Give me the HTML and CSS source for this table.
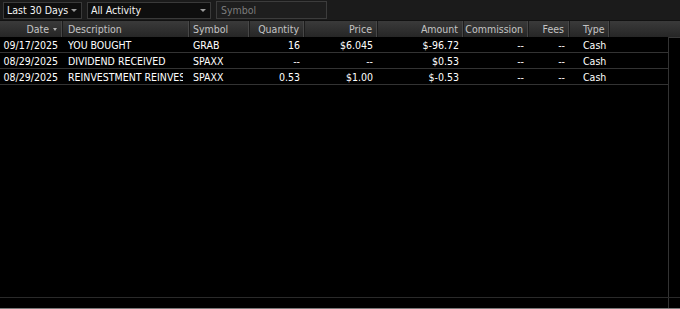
FILE: index.html
```html
<!DOCTYPE html>
<html>
<head>
<meta charset="utf-8">
<link rel="stylesheet" href="styles.css">
</head>
<body>
<div class="app">
  <div class="toolbar">
    <div class="select sel-range"><span>Last 30 Days</span><span class="caret"></span></div>
    <div class="select sel-activity"><span>All Activity</span><span class="caret"></span></div>
    <div class="input"><span class="placeholder">Symbol</span></div>
  </div>
  <div class="head">
    <div class="hc c-date r">Date <span class="sort"></span></div>
    <div class="hc c-desc">Description</div>
    <div class="hc c-sym">Symbol</div>
    <div class="hc c-qty r">Quantity</div>
    <div class="hc c-price r">Price</div>
    <div class="hc c-amt r">Amount</div>
    <div class="hc c-comm r">Commission</div>
    <div class="hc c-fees r">Fees</div>
    <div class="hc c-type">Type</div>
    <div class="hc c-fill"></div>
  </div>
  <div class="main">
    <div class="rows">
      <div class="row">
        <div class="c c-date r">09/17/2025</div>
        <div class="c c-desc"><span class="clip">YOU BOUGHT</span></div>
        <div class="c c-sym">GRAB</div>
        <div class="c c-qty r">16</div>
        <div class="c c-price r">$6.045</div>
        <div class="c c-amt r">$-96.72</div>
        <div class="c c-comm r">--</div>
        <div class="c c-fees r">--</div>
        <div class="c c-type">Cash</div>
      </div>
      <div class="row">
        <div class="c c-date r">08/29/2025</div>
        <div class="c c-desc"><span class="clip">DIVIDEND RECEIVED</span></div>
        <div class="c c-sym">SPAXX</div>
        <div class="c c-qty r">--</div>
        <div class="c c-price r">--</div>
        <div class="c c-amt r">$0.53</div>
        <div class="c c-comm r">--</div>
        <div class="c c-fees r">--</div>
        <div class="c c-type">Cash</div>
      </div>
      <div class="row">
        <div class="c c-date r">08/29/2025</div>
        <div class="c c-desc"><span class="clip">REINVESTMENT REINVEST</span></div>
        <div class="c c-sym">SPAXX</div>
        <div class="c c-qty r">0.53</div>
        <div class="c c-price r">$1.00</div>
        <div class="c c-amt r">$-0.53</div>
        <div class="c c-comm r">--</div>
        <div class="c c-fees r">--</div>
        <div class="c c-type">Cash</div>
      </div>
    </div>
    <div class="gutter"></div>
  </div>
  <div class="foot">
    <div class="foot-left"></div>
    <div class="foot-gutter"></div>
  </div>
  <div class="edge"></div>
</div>
</body>
</html>
```
FILE: styles.css
```css
* { box-sizing: border-box; }
html, body { margin: 0; padding: 0; background: #000; }
body {
  width: 680px;
  height: 309px;
  overflow: hidden;
  font-family: "DejaVu Sans Condensed", "DejaVu Sans", sans-serif;
  font-stretch: condensed;
  font-size: 10.5px;
  color: #ffffff;
}
.app { display: flex; flex-direction: column; height: 309px; }

.toolbar {
  height: 20px;
  background: #1b1b1b;
  display: flex;
  align-items: center;
  padding: 0 3px;
  gap: 5px;
  flex: none;
}
.select {
  height: 17px;
  background: #0e0e0e;
  border: 1px solid #3a3a3a;
  display: flex;
  align-items: center;
  justify-content: space-between;
  padding: 0 4px 0 3px;
  color: #f4f4f4;
}
.sel-range { width: 79px; }
.sel-activity { width: 124px; }
.caret {
  width: 0; height: 0;
  border-left: 3px solid transparent;
  border-right: 3px solid transparent;
  border-top: 3px solid #9a9a9a;
}
.input {
  width: 111px;
  height: 18px;
  background: #1e1e1e;
  border: 1px solid #3c3c3c;
  display: flex;
  align-items: center;
  padding-left: 4px;
}
.placeholder { color: #7c7c7c; }

.head {
  height: 17px;
  flex: none;
  display: flex;
  background: linear-gradient(#3a3a3a, #262626);
  border-top: 1px solid #111;
  color: #c4c4c4;
}
.hc {
  height: 100%;
  display: flex;
  align-items: center;
  padding: 0 5px;
  border-right: 1px solid #1c1c1c;
  box-shadow: inset -1px 0 0 #474747;
  white-space: nowrap;
}
.hc.r { justify-content: flex-end; }
.hc.c-fill { flex: 1; border-right: 0; box-shadow: none; }
.sort {
  display: inline-block;
  width: 0; height: 0;
  border-left: 2.5px solid transparent;
  border-right: 2.5px solid transparent;
  border-top: 3px solid #b0b0b0;
  margin-left: 4px;
}

.c-date { width: 63px; }
.c-desc { width: 127px; }
.c-sym { width: 60px; padding-left: 3px !important; }
.c-qty { width: 55px; }
.c-price { width: 73px; }
.c-amt { width: 86px; }
.c-comm { width: 65px; }
.c-fees { width: 41px; }
.c-type { width: 40px; padding-left: 13px !important; }

.main { flex: 1; display: flex; min-height: 0; }
.rows { width: 669px; border-right: 1px solid #333; }
.gutter { flex: 1; border-top: 1px solid #3a3a3a; }
.row {
  display: flex;
  height: 16px;
  border-bottom: 1px solid #333;
}
.c {
  display: flex;
  align-items: center;
  padding: 0 5px;
  white-space: nowrap;
  overflow: hidden;
  flex: none;
}
.c.r { justify-content: flex-end; }
.c-desc.c { padding-right: 7px; }
.clip {
  display: block;
  overflow: hidden;
  white-space: nowrap;
  width: 100%;
}

.foot {
  height: 11px;
  flex: none;
  display: flex;
  border-top: 1px solid #2a2a2a;
}
.foot-left { width: 669px; border-right: 1px solid #333; }
.foot-gutter { flex: 1; }
.edge { height: 1px; background: #7a7a7a; flex: none; }
```
